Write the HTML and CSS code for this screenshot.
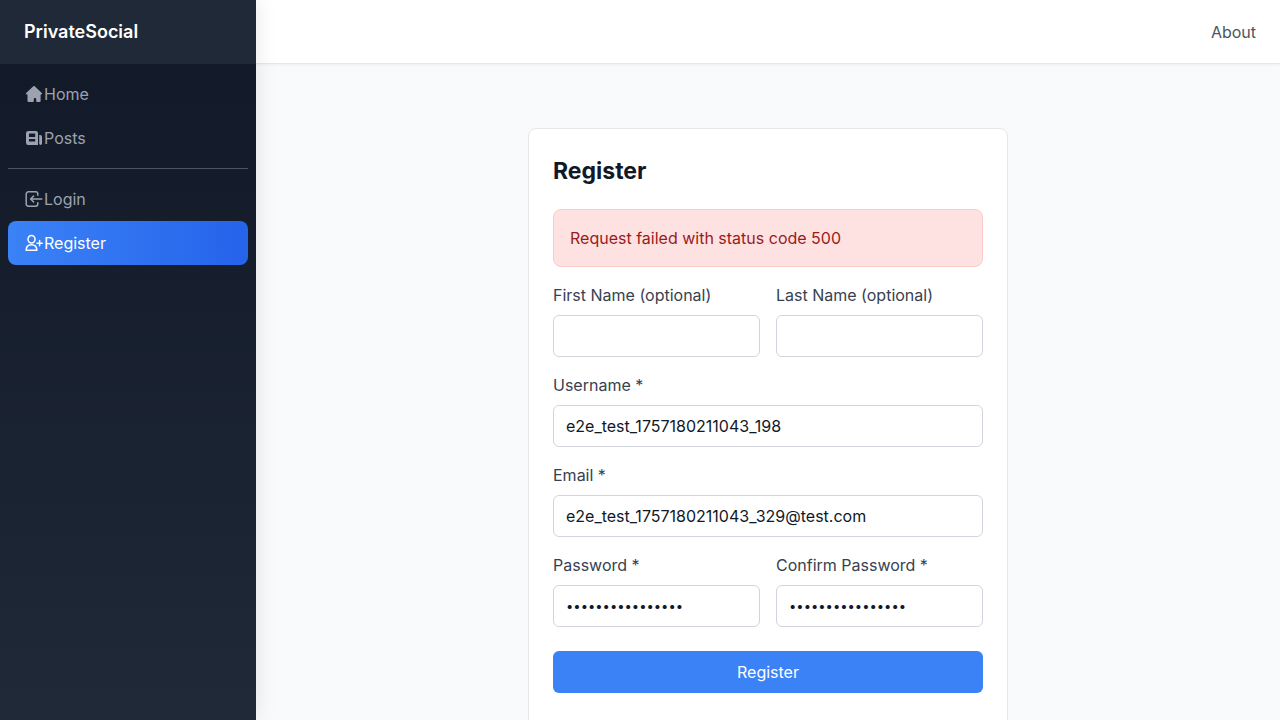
FILE: index.html
```html
<!DOCTYPE html>
<html lang="en">
<head>
<meta charset="utf-8">
<meta name="viewport" content="width=device-width, initial-scale=1">
<title>Register - PrivateSocial</title>
<link rel="stylesheet" href="styles.css">
</head>
<body>
<div class="shell">
  <aside class="sidebar">
    <div class="sidebar-top"><a class="brand" href="#">PrivateSocial</a></div>
    <nav class="nav">
      <a class="nav-link" href="#">
        <svg class="icon" viewBox="0 0 20 20" fill="currentColor" aria-hidden="true"><path d="M9.300 2.300a1 1 0 0 1 1.400 0l7.100 6.800c.6.6.2 1.500-.6 1.500h-.6V17a1 1 0 0 1-1 1h-2.400a1 1 0 0 1-1-1v-2.100a1 1 0 0 0-1-1h-.4a1 1 0 0 0-1 1V17a1 1 0 0 1-1 1H4.500a1 1 0 0 1-1-1v-6.400h-.7c-.9 0-1.200-.9-.6-1.500z"/></svg>
        <span>Home</span>
      </a>
      <a class="nav-link" href="#">
        <svg class="icon" viewBox="0 0 20 20" fill="currentColor" aria-hidden="true"><path fill-rule="evenodd" d="M4.300 3h7.400A2.300 2.300 0 0 1 14 5.300V17H4.300A2.300 2.300 0 0 1 2 14.700V5.300A2.300 2.300 0 0 1 4.300 3zM5 5.500v3.500h6.200V5.500zM5 11v2.400h6.200V11z"/><path d="M15.200 7h1A1.800 1.800 0 0 1 18 8.800v6.700a1.400 1.400 0 0 1-2.800 0z"/></svg>
        <span>Posts</span>
      </a>
      <hr class="divider">
      <a class="nav-link" href="#">
        <svg class="icon icon-line" viewBox="0 0 20 20" aria-hidden="true"><path d="M13.800 6.200V5A2.200 2.200 0 0 0 11.600 2.800H4.400A2.200 2.200 0 0 0 2.200 5v10a2.200 2.200 0 0 0 2.200 2.200h7.200a2.200 2.200 0 0 0 2.200-2.200v-1.200M17.800 10H6.600M9.600 7l-3 3 3 3"/></svg>
        <span>Login</span>
      </a>
      <a class="nav-link is-active" href="#" aria-current="page">
        <svg class="icon icon-line" viewBox="0 0 20 20" aria-hidden="true"><ellipse cx="7.500" cy="6.200" rx="3.500" ry="3.800"/><path d="M7.500 11.800c-3.200 0-5.300 2-5.400 5.500h10.800c-.1-3.500-2.200-5.500-5.400-5.500zM15.600 7.600v5.200M13 10.200h5.200"/></svg>
        <span>Register</span>
      </a>
    </nav>
  </aside>
  <div class="page">
    <header class="topbar"><a class="top-link" href="#">About</a></header>
    <main class="content">
      <section class="card">
        <h1 class="title">Register</h1>
        <div class="alert" role="alert">Request failed with status code 500</div>
        <form class="form">
          <div class="row">
            <div class="field"><label for="first">First Name (optional)</label><input id="first" type="text"></div>
            <div class="field"><label for="last">Last Name (optional)</label><input id="last" type="text"></div>
          </div>
          <div class="field"><label for="username">Username *</label><input id="username" type="text" value="e2e_test_1757180211043_198"></div>
          <div class="field"><label for="email">Email *</label><input id="email" type="email" value="e2e_test_1757180211043_329@test.com"></div>
          <div class="row">
            <div class="field"><label for="password">Password *</label><input id="password" type="password" value="TestPassword123!"></div>
            <div class="field"><label for="confirm">Confirm Password *</label><input id="confirm" type="password" value="TestPassword123!"></div>
          </div>
          <button class="submit" type="submit">Register</button>
        </form>
      </section>
    </main>
  </div>
</div>
</body>
</html>
```
FILE: styles.css
```css
* { box-sizing: border-box; }
body {
  margin: 0;
  font-family: Inter, "Liberation Sans", sans-serif;
  font-size: 16px;
  line-height: 24px;
  color: #111827;
  background: #f8fafc;
}
a { color: inherit; text-decoration: none; }
.shell { display: flex; height: 100vh; }
.sidebar {
  flex: 0 0 256px;
  z-index: 1;
  background: linear-gradient(180deg, #111827, #1f2937);
  box-shadow: 0 0 20px rgba(0, 0, 0, 0.1);
}
.sidebar-top {
  display: flex;
  align-items: center;
  height: 64px;
  padding: 0 24px;
  background: #1f2937;
}
.brand { font-size: 18px; font-weight: 600; color: #fff; }
.nav { padding: 8px; }
.nav-link {
  display: flex;
  align-items: center;
  height: 44px;
  padding: 0 16px;
  border-radius: 8px;
  color: #9ca3af;
}
.nav-link.is-active { color: #fff; background: linear-gradient(90deg, #3b82f6, #2563eb); }
.icon { width: 20px; height: 20px; flex: none; }
.icon-line {
  fill: none;
  stroke: currentColor;
  stroke-width: 1.5;
  stroke-linecap: round;
  stroke-linejoin: round;
}
.divider { height: 1px; margin: 8px 0; border: 0; background: #4b5563; }
.page { flex: 1; min-width: 0; display: flex; flex-direction: column; }
.topbar {
  flex: none;
  display: flex;
  align-items: center;
  justify-content: flex-end;
  height: 64px;
  padding: 0 24px;
  background: #fff;
  border-bottom: 1px solid #e5e7eb;
  box-shadow: 0 1px 3px rgba(0, 0, 0, 0.05);
}
.top-link { color: #4b5563; }
.content { flex: 1; min-height: 0; padding: 64px 24px; overflow-y: auto; scrollbar-width: none; }
.card {
  max-width: 480px;
  margin: 0 auto;
  padding: 24px 24px 48px;
  background: #fff;
  border: 1px solid #e5e7eb;
  border-radius: 8px;
}
.title { margin: 0 0 20px; font-size: 23px; line-height: 36px; font-weight: 700; }
.alert {
  margin-bottom: 16px;
  padding: 16px;
  color: #991b1b;
  background: #fee2e2;
  border: 1px solid #fecaca;
  border-radius: 8px;
}
.form { display: flex; flex-direction: column; gap: 16px; }
.row { display: grid; grid-template-columns: 1fr 1fr; gap: 16px; }
.field { display: flex; flex-direction: column; gap: 8px; min-width: 0; }
.field label { color: #374151; }
.field input {
  width: 100%;
  height: 42px;
  padding: 8px 12px;
  font: inherit;
  color: #111827;
  background: #fff;
  border: 1px solid #d1d5db;
  border-radius: 6px;
}
.field input[type="password"] { font-size: 13px; }
.submit {
  height: 42px;
  margin-top: 8px;
  font: inherit;
  color: #fff;
  background: #3b82f6;
  border: 0;
  border-radius: 6px;
}
```
